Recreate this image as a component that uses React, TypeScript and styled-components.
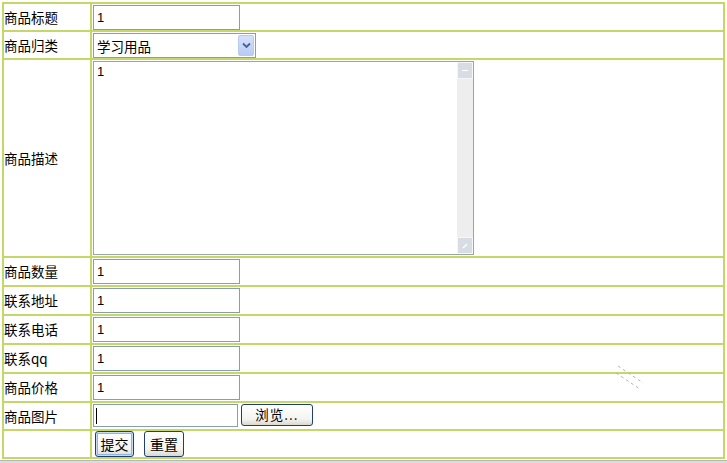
import React from "react";
import styled, { createGlobalStyle, css } from "styled-components";

const LINE = "#c3d866";

const GlobalStyle = createGlobalStyle`
  html, body { margin: 0; padding: 0; background: #ffffff; }
  body { font-family: "Noto Sans CJK SC", "Liberation Sans", sans-serif; font-size: 12px; color: #000; }
`;

const Page = styled.div`
  position: relative;
  width: 727px;
  height: 463px;
  box-sizing: border-box;
  padding: 2px 0 0 2px;
  display: flex;
  flex-direction: column;
`;

const FormTable = styled.table`
  border-collapse: separate;
  border-spacing: 0;
  table-layout: fixed;
  width: 723px;
  border-top: 2px solid ${LINE};
  border-left: 2px solid ${LINE};
`;

const LabelCol = styled.col`
  width: 88px;
`;

const Row = styled.tr<{ $h: number }>`
  height: ${(p) => p.$h}px;
`;

const LabelCell = styled.td`
  box-sizing: border-box;
  border-right: 2px solid ${LINE};
  border-bottom: 2px solid ${LINE};
  padding: 0;
  vertical-align: middle;
  font-size: 13.5px;
  line-height: 15px;
  white-space: nowrap;
`;

const ValueCell = styled.td`
  box-sizing: border-box;
  border-right: 2px solid ${LINE};
  border-bottom: 2px solid ${LINE};
  padding: 1px 0 0 1px;
  vertical-align: top;
`;

const fieldBorder = "#8a9ea8";

const TextInput = styled.input`
  display: block;
  box-sizing: border-box;
  width: 147px;
  height: 25px;
  margin: 0;
  padding: 0 3px;
  border: 1px solid ${fieldBorder};
  font-family: "Liberation Sans", sans-serif;
  font-size: 13px;
  color: #000;
  background: #fff;
  outline: none;
`;

const SelectBox = styled.div`
  position: relative;
  box-sizing: border-box;
  width: 163px;
  height: 25px;
  border: 1px solid ${fieldBorder};
  background: #fff;
`;

const NativeSelect = styled.select`
  appearance: none;
  box-sizing: border-box;
  width: 100%;
  height: 100%;
  margin: 0;
  padding: 0 0 0 3px;
  border: none;
  background: transparent;
  font-family: "Noto Sans CJK SC", sans-serif;
  font-size: 13.5px;
  color: #000;
  outline: none;
`;

const DropButton = styled.span`
  position: absolute;
  top: 1px;
  right: 1px;
  width: 16px;
  height: 21px;
  box-sizing: border-box;
  border: 1px solid #b9c9ef;
  border-radius: 2px;
  background: linear-gradient(#d6e2fd, #b7cbf4);
  display: flex;
  align-items: center;
  justify-content: center;
  pointer-events: none;
`;

const AreaFrame = styled.div`
  display: flex;
  box-sizing: border-box;
  width: 381px;
  height: 194px;
  border: 1px solid #96a8a0;
  background: #fff;
`;

const TextArea = styled.textarea`
  flex: 1;
  display: block;
  box-sizing: border-box;
  margin: 0;
  padding: 2px 3px;
  border: none;
  resize: none;
  overflow: hidden;
  font-family: "Liberation Sans", sans-serif;
  font-size: 13px;
  color: #000;
  outline: none;
`;

const ScrollTrack = styled.div`
  width: 16px;
  background: #eeeeee;
  display: flex;
  flex-direction: column;
  justify-content: space-between;
`;

const ScrollArrow = styled.div`
  box-sizing: border-box;
  width: 16px;
  height: 17px;
  border: 1px solid #f6f7f9;
  background: #d8dde4;
  display: flex;
  align-items: center;
  justify-content: center;
`;

const FileRow = styled.div`
  display: flex;
  align-items: flex-start;
`;

const FileBox = styled.div`
  position: relative;
  box-sizing: border-box;
  width: 145px;
  height: 23px;
  border: 1px solid ${fieldBorder};
  background: #fff;
`;

const Caret = styled.span`
  position: absolute;
  left: 2px;
  top: 3px;
  width: 1px;
  height: 16px;
  background: #000;
`;

const XpButton = styled.button<{ $primary?: boolean; $w: number; $h: number }>`
  box-sizing: border-box;
  width: ${(p) => p.$w}px;
  height: ${(p) => p.$h}px;
  margin: 0;
  padding: 0;
  border: 1px solid #1f3f6f;
  border-radius: 3px;
  background: linear-gradient(#ffffff, #f4f4f0 70%, #dcd8cf);
  font-family: "Noto Sans CJK SC", sans-serif;
  font-size: 14px;
  line-height: 1;
  color: #000;
  ${(p) =>
    p.$primary &&
    css`
      box-shadow: inset 0 0 0 1px #c9dcfa, inset 0 0 0 2px #8fb1e8;
    `}
`;

const BrowseButton = styled(XpButton)`
  margin-left: 3px;
  font-size: 13.5px;
  letter-spacing: 1px;
`;

const ButtonBar = styled.div`
  display: flex;
  gap: 10px;
  padding-left: 2px;
  margin-top: -1px;
`;

const Footer = styled.div`
  margin-top: 1px;
  margin-left: -2px;
  height: 3px;
  border-top: 1px solid #b8b8b8;
  background: #dcdcdc;
`;

const Smudge = styled.svg`
  position: absolute;
  left: 612px;
  top: 362px;
  pointer-events: none;
`;

const textRows: { label: string; value: string }[] = [
  { label: "商品数量", value: "1" },
  { label: "联系地址", value: "1" },
  { label: "联系电话", value: "1" },
  { label: "联系qq", value: "1" },
  { label: "商品价格", value: "1" },
];

export default function App() {
  return (
    <>
      <GlobalStyle />
      <Page>
        <FormTable>
          <colgroup>
            <LabelCol />
            <col />
          </colgroup>
          <tbody>
            <Row $h={28}>
              <LabelCell>商品标题</LabelCell>
              <ValueCell>
                <TextInput defaultValue="1" />
              </ValueCell>
            </Row>
            <Row $h={28}>
              <LabelCell>商品归类</LabelCell>
              <ValueCell>
                <SelectBox>
                  <NativeSelect defaultValue="学习用品">
                    <option>学习用品</option>
                  </NativeSelect>
                  <DropButton>
                    <svg width="9" height="7" viewBox="0 0 9 7">
                      <path d="M1 1.5 L4.5 5 L8 1.5" fill="none" stroke="#4a5f8c" strokeWidth="1.8" />
                    </svg>
                  </DropButton>
                </SelectBox>
              </ValueCell>
            </Row>
            <Row $h={198}>
              <LabelCell>商品描述</LabelCell>
              <ValueCell>
                <AreaFrame>
                  <TextArea defaultValue="1" />
                  <ScrollTrack>
                    <ScrollArrow>
                      <svg width="8" height="3" viewBox="0 0 8 3">
                        <path d="M1 1.5 H7" stroke="#ffffff" strokeWidth="1.2" />
                      </svg>
                    </ScrollArrow>
                    <ScrollArrow>
                      <svg width="6" height="6" viewBox="0 0 6 6">
                        <path d="M1 5 L5 1" stroke="#ffffff" strokeWidth="1.2" />
                      </svg>
                    </ScrollArrow>
                  </ScrollTrack>
                </AreaFrame>
              </ValueCell>
            </Row>
            {textRows.map((r) => (
              <Row $h={29} key={r.label}>
                <LabelCell>{r.label}</LabelCell>
                <ValueCell>
                  <TextInput defaultValue={r.value} />
                </ValueCell>
              </Row>
            ))}
            <Row $h={28}>
              <LabelCell>商品图片</LabelCell>
              <ValueCell>
                <FileRow>
                  <FileBox>
                    <Caret />
                  </FileBox>
                  <BrowseButton $w={72} $h={22}>浏览...</BrowseButton>
                </FileRow>
              </ValueCell>
            </Row>
            <Row $h={28}>
              <LabelCell />
              <ValueCell>
                <ButtonBar>
                  <XpButton $primary $w={39} $h={26}>提交</XpButton>
                  <XpButton $w={40} $h={26}>重置</XpButton>
                </ButtonBar>
              </ValueCell>
            </Row>
          </tbody>
        </FormTable>
        <Footer />
        <Smudge width="36" height="32" viewBox="0 0 36 32">
          <path d="M6 4 L31 21" stroke="#b4b4b4" strokeWidth="1" strokeDasharray="3 3" fill="none" />
          <path d="M4 11 L28 27" stroke="#b4b4b4" strokeWidth="1" strokeDasharray="3 3" fill="none" />
        </Smudge>
      </Page>
    </>
  );
}
